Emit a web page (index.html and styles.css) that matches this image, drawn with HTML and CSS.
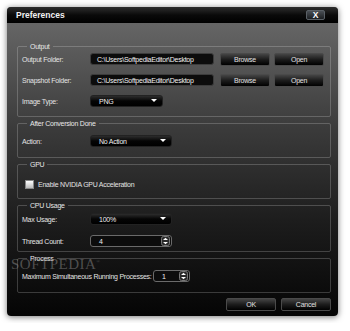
FILE: index.html
```html
<!DOCTYPE html>
<html lang="en">
<head>
    <meta charset="UTF-8">
    <title>Preferences</title>
    <link rel="stylesheet" href="styles.css">
</head>
<body>
    <div class="dialog">
        <div class="titlebar">
            <span class="title">Preferences</span>
            <button class="close">X</button>
        </div>
        <div class="content">
            <!-- Output -->
            <fieldset class="group group-output">
                <legend>Output</legend>
                <div class="row">
                    <label>Output Folder:</label>
                    <div class="field path">C:\Users\SoftpediaEditor\Desktop</div>
                    <button class="btn">Browse</button>
                    <button class="btn">Open</button>
                </div>
                <div class="row">
                    <label>Snapshot Folder:</label>
                    <div class="field path">C:\Users\SoftpediaEditor\Desktop</div>
                    <button class="btn">Browse</button>
                    <button class="btn">Open</button>
                </div>
                <div class="row">
                    <label>Image Type:</label>
                    <div class="select short">PNG<span class="arrow"></span></div>
                </div>
            </fieldset>
            <!-- After Conversion Done -->
            <fieldset class="group group-after">
                <legend>After Conversion Done</legend>
                <div class="row">
                    <label>Action:</label>
                    <div class="select">No Action<span class="arrow"></span></div>
                </div>
            </fieldset>
            <!-- GPU -->
            <fieldset class="group group-gpu">
                <legend>GPU</legend>
                <div class="row">
                    <span class="checkbox"></span>
                    <span class="check-label">Enable NVIDIA GPU Acceleration</span>
                </div>
            </fieldset>
            <!-- CPU Usage -->
            <fieldset class="group group-cpu">
                <legend>CPU Usage</legend>
                <div class="row">
                    <label>Max Usage:</label>
                    <div class="select">100%<span class="arrow"></span></div>
                </div>
                <div class="row">
                    <label>Thread Count:</label>
                    <div class="spin">4
                        <svg class="spin-arrows" width="9" height="10" viewBox="0 0 9 10">
                            <rect x="0.5" y="0.5" width="8" height="9" rx="2" fill="#2a2a2a" stroke="#777"/>
                            <path d="M2 4 L4.5 1.8 L7 4 Z" fill="#fff"/>
                            <path d="M2 6 L4.5 8.2 L7 6 Z" fill="#fff"/>
                        </svg>
                    </div>
                </div>
            </fieldset>
            <!-- Process -->
            <fieldset class="group group-process">
                <legend>Process</legend>
                <div class="row">
                    <label class="wide">Maximum Simultaneous Running Processes:</label>
                    <div class="spin small">1
                        <svg class="spin-arrows" width="9" height="10" viewBox="0 0 9 10">
                            <rect x="0.5" y="0.5" width="8" height="9" rx="2" fill="#2a2a2a" stroke="#777"/>
                            <path d="M2 4 L4.5 1.8 L7 4 Z" fill="#fff"/>
                            <path d="M2 6 L4.5 8.2 L7 6 Z" fill="#fff"/>
                        </svg>
                    </div>
                </div>
            </fieldset>
            <div class="footer">
                <button class="btn">OK</button>
                <button class="btn">Cancel</button>
            </div>
            <div class="watermark">SOFTPEDIA<sup>®</sup></div>
        </div>
    </div>
</body>
</html>
```

FILE: styles.css
```css
body {
    margin: 0;
    padding: 7px;
    background-color: #fff;
    font-family: "Liberation Sans", Arial, sans-serif;
    font-size: 7px;
    letter-spacing: -0.25px;
    color: #e4e4e4;
}
.dialog {
    width: 331px;
    height: 309px;
    border-radius: 4px;
    overflow: hidden;
    background: linear-gradient(#6c6c6c, #3a3a3a 40%, #1c1c1c 70%, #050505);
    box-shadow: 0 1px 6px rgba(0, 0, 0, 0.55);
}
.titlebar {
    height: 16px;
    background: linear-gradient(#2e2e2e, #0a0a0a 50%, #000);
    display: flex;
    align-items: center;
    justify-content: space-between;
    padding: 0 13px 0 9px;
}
.title {
    font-weight: bold;
    font-size: 8.5px;
    letter-spacing: 0;
    color: #f2f2f2;
}
.close {
    width: 19px;
    height: 10px;
    padding: 0;
    border: 1px solid #5a6066;
    border-radius: 2px;
    background: linear-gradient(#4a4f55, #1c1f22);
    color: #fff;
    font-family: "Liberation Sans", Arial, sans-serif;
    font-weight: bold;
    font-size: 8.5px;
    line-height: 8px;
}
.content {
    position: relative;
    padding: 18px 7px 0 10px;
}
.group {
    margin: 0 0 1px 0;
    padding: 0 4px;
    min-width: 0;
    border: 1px solid rgba(255, 255, 255, 0.2);
    border-radius: 2px;
}
.group legend {
    margin-left: 5px;
    padding: 1px 3px 0;
    height: 9px;
    line-height: 9px;
    color: #e8e8e8;
}
.group-output {
    padding-top: 1px;
    padding-bottom: 8px;
}
.group-output .row + .row {
    margin-top: 7px;
}
.group-after {
    padding-top: 6px;
    padding-bottom: 9px;
}
.group-gpu {
    padding-top: 8px;
    padding-bottom: 7px;
}
.group-cpu {
    padding-top: 2px;
    padding-bottom: 3px;
}
.group-cpu .row + .row {
    margin-top: 8px;
}
.group-process {
    padding-top: 6px;
    padding-bottom: 9px;
}
.row {
    display: flex;
    align-items: center;
    height: 14px;
}
.row label {
    width: 68px;
    flex: none;
    white-space: nowrap;
}
.row label.wide {
    width: 131px;
}
.field, .select, .spin {
    height: 12px;
    box-sizing: border-box;
    display: flex;
    align-items: center;
    padding-left: 6px;
    border-radius: 3px;
    color: #f0f0f0;
    white-space: nowrap;
    overflow: hidden;
}
.path {
    width: 124px;
    margin-right: 6px;
    background: #0c0c0c;
    border: 1px solid #3c3c3c;
}
.select {
    width: 82px;
    position: relative;
    padding-left: 8px;
    background: linear-gradient(#2c2c2c, #050505 50%, #000);
    border: 1px solid #222;
}
.select.short {
    width: 73px;
}
.arrow {
    position: absolute;
    right: 5px;
    top: 3px;
    border-left: 3px solid transparent;
    border-right: 3px solid transparent;
    border-top: 3px solid #fff;
}
.spin {
    width: 82px;
    position: relative;
    padding-left: 8px;
    background: #0c0c0c;
    border: 1px solid #6a6a6a;
}
.spin.small {
    width: 37px;
}
.spin-arrows {
    position: absolute;
    right: 1px;
    top: 0;
}
.checkbox {
    width: 7px;
    height: 7px;
    margin: 0 4px 0 3px;
    background: linear-gradient(#fff, #bbb);
    border: 1px solid #888;
}
.btn {
    width: 50px;
    height: 13px;
    padding: 0;
    border: 1px solid #4a4a4a;
    border-radius: 2px;
    background: linear-gradient(#444, #1c1c1c 50%, #000);
    color: #e0e0e0;
    font-family: "Liberation Sans", Arial, sans-serif;
    font-size: 7px;
    letter-spacing: -0.25px;
}
.btn + .btn {
    margin-left: 4px;
}
.footer {
    display: flex;
    justify-content: flex-end;
    margin-top: 5px;
}
.footer .btn + .btn {
    margin-left: 5px;
}
.watermark {
    position: absolute;
    left: 4px;
    top: 233px;
    font-family: "Liberation Serif", serif;
    font-size: 15px;
    letter-spacing: 0.5px;
    color: rgba(140, 140, 140, 0.5);
}
.watermark sup {
    font-size: 5px;
}
```
